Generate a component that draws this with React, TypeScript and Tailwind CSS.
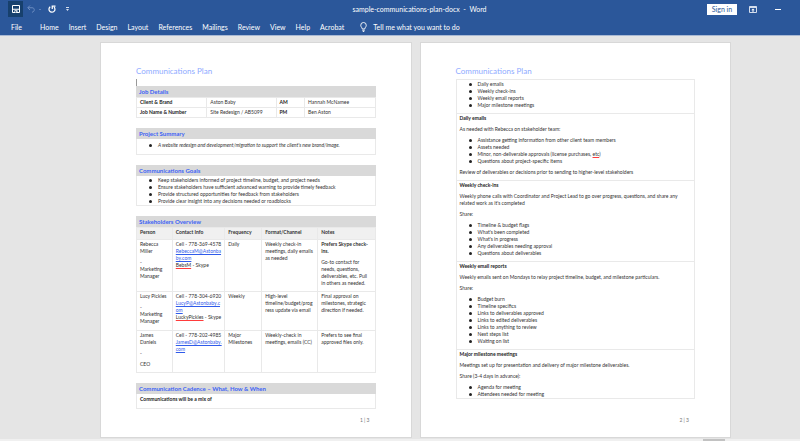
import type { ReactNode } from "react";
import { clsx } from "clsx";

const tabs = ["Home", "Insert", "Design", "Layout", "References", "Mailings", "Review", "View", "Help", "Acrobat"];

const jobRows = [
  ["Client & Brand", "Aston Baby", "AM", "Hannah McNamee"],
  ["Job Name & Number", "Site Redesign / AB5099", "PM", "Ben Aston"],
];

const goals = [
  "Keep stakeholders informed of project timeline, budget, and project needs",
  "Ensure stakeholders have sufficient advanced warning to provide timely feedback",
  "Provide structured opportunities for feedback from stakeholders",
  "Provide clear insight into any decisions needed or roadblocks",
];

function TitleBar() {
  return (
    <div className="grid grid-cols-[132px_1fr_93px] items-center h-[18px]">
      <div className="flex items-center pl-2">
        <button aria-label="Save" className="flex items-center justify-center w-[15px] h-4 bg-[#17406d]">
          <svg viewBox="0 0 16 16" className="size-2">
            <path d="M1 1h14v14H1z" fill="none" stroke="#fff" strokeWidth="2" />
            <path d="M2 8.5h12" stroke="#fff" strokeWidth="2" />
            <path d="M5 10.5h6V15H5z" fill="#fff" />
            <path d="M6.5 12h2v3h-2z" fill="#17406d" />
          </svg>
        </button>
        <button aria-label="Undo" className="flex items-center ml-1">
          <svg viewBox="0 0 16 16" className="size-2" fill="none" stroke="#6c8cc0" strokeWidth="2">
            <path d="M6 1L1.500 5.500 6 10M2 5.500h8c3 0 4.500 1.500 4.500 4s-1.500 4.500-4.500 5" />
          </svg>
        </button>
        <span className="w-[2px] h-px ml-1 bg-[#5d80b8]" />
        <button aria-label="Repeat" className="flex items-center ml-[7px]">
          <svg viewBox="0 0 16 16" className="size-2" fill="none" stroke="#fff" strokeWidth="2.500">
            <path d="M4.500 3.500A6 6 0 1 0 12 4" />
            <path d="M8.500 8V2H15" />
          </svg>
        </button>
        <button aria-label="Customize toolbar" className="flex items-center ml-[10px]">
          <svg viewBox="0 0 6 8" className="w-[3px] h-1" fill="#d5deed">
            <path d="M0 0h6v2H0zM0 4h6L3 8z" />
          </svg>
        </button>
      </div>
      <div className="text-center leading-[10px]">sample-communications-plan-docx&nbsp; - &nbsp;Word</div>
      <div className="flex items-center">
        <button className="w-[30px] h-[11px] bg-white text-[#2b579a] leading-[10px]">Sign in</button>
        <button aria-label="Ribbon display options" className="flex items-center ml-3">
          <svg viewBox="0 0 16 14" className="w-2 h-[7px]">
            <path d="M1 1h14v12H1z" fill="none" stroke="#d5deed" strokeWidth="2" />
            <path d="M1 1h14v3H1z" fill="#d5deed" />
            <path d="M8 5l3.500 3.500H9V12H7V8.500H4.500z" fill="#fff" />
          </svg>
        </button>
        <button aria-label="Minimize" className="flex items-center w-[6px] h-2 ml-[18px]">
          <span className="w-full h-px bg-white" />
        </button>
      </div>
    </div>
  );
}

function Ribbon() {
  return (
    <header className="bg-[#2b579a] text-white text-[7px] border-b border-[#a9b9d4]">
      <TitleBar />
      <nav className="flex items-center h-[17px] pl-[11px] leading-[10px] whitespace-nowrap">
        <button className="mr-[18px]">File</button>
        <div className="flex gap-[10px]">
          {tabs.map((tab) => (
            <button key={tab}>{tab}</button>
          ))}
        </div>
        <button className="flex items-center gap-[6px] ml-4">
          <svg viewBox="0 0 14 20" className="w-[7px] h-[10px]" fill="none" stroke="#fff" strokeWidth="1.800">
            <path d="M4.500 14c0-3-3-4-3-7.500a5.500 5.500 0 0 1 11 0c0 3.500-3 4.500-3 7.500z" />
            <path d="M4.500 16.500h5M5.500 19h3" />
          </svg>
          Tell me what you want to do
        </button>
      </nav>
    </header>
  );
}

function Page({ number, children }: { number: number; children: ReactNode }) {
  return (
    <article className="flex flex-col bg-white border border-[#d8d8d8] px-[35px] pt-[23px] pb-[13px]">
      <h1 className="mb-[3px] text-[8px] leading-[10px] text-[#8eaaff]">Communications Plan</h1>
      {children}
      <footer className="mt-auto pr-[6px] text-right text-[#777]">{number} | 3</footer>
    </article>
  );
}

function Section({ title, children }: { title: string; children: ReactNode }) {
  return (
    <section className="mb-[10px] last-of-type:mb-0">
      <h2 className="px-[3px] bg-[#d9d9d9] text-[#3d63f5] text-[6px] leading-[11px] font-bold">{title}</h2>
      {children}
    </section>
  );
}

function Bullets({ items }: { items: ReactNode[] }) {
  return (
    <ul className="pl-[9px]">
      {items.map((item, i) => (
        <li
          key={i}
          className="flex items-center gap-[6px] before:content-[''] before:size-[3px] before:rounded-full before:bg-[#222]"
        >
          <span>{item}</span>
        </li>
      ))}
    </ul>
  );
}

function Misspelled({ children }: { children: ReactNode }) {
  return <span className="underline decoration-1 decoration-[#ff3b3b]">{children}</span>;
}

function MailLink({ children }: { children: ReactNode }) {
  return (
    <a href="#mail" className="text-[#2f5bea] underline">
      {children}
    </a>
  );
}

function Block({ title, children }: { title?: string; children: ReactNode }) {
  return (
    <section className="flex flex-col gap-1 px-[3px] pt-[1px] pb-1 border-t border-[#e9e9e9] last:pb-0">
      {title && <h3 className="font-bold text-[#222]">{title}</h3>}
      {children}
    </section>
  );
}

const stakeholders = [
  {
    person: [["Rebecca", "Miller"], ["-", "Marketing", "Manager"]],
    contact: (
      <>
        Cell - 778-369-4578
        <br />
        <MailLink>RebeccaM@Astonba<br />by.com</MailLink>
        <br />
        <Misspelled>BebsM</Misspelled> - Skype
      </>
    ),
    frequency: "Daily",
    format: <>Weekly check-in<br />meetings, daily emails<br />as needed</>,
    notes: (
      <>
        <p className="mb-1 font-bold">Prefers Skype check-<br />ins.</p>
        <p>Go-to contact for<br />needs, questions,<br />deliverables, etc. Pull<br />in others as needed.</p>
      </>
    ),
    height: "h-[52px]",
  },
  {
    person: [["Lucy Pickles"], ["-", "Marketing", "Manager"]],
    contact: (
      <>
        Cell - 778-304-6920
        <br />
        <MailLink>LucyP@Astonbaby.c<br />om</MailLink>
        <br />
        <Misspelled>LuckyPickles</Misspelled> - Skype
      </>
    ),
    frequency: "Weekly",
    format: <>High-level<br />timeline/budget/prog<br />ress update via email</>,
    notes: <>Final approval on<br />milestones, strategic<br />direction if needed.</>,
    height: "h-[39px]",
  },
  {
    person: [["James", "Daniels"], ["-"], ["CEO"]],
    contact: (
      <>
        Cell - 778-202-4985
        <br />
        <MailLink>JamesD@Astonbaby.<br />com</MailLink>
      </>
    ),
    frequency: <>Major<br />Milestones</>,
    format: <>Weekly-check in<br />meetings, emails (CC)</>,
    notes: <>Prefers to see final<br />approved files only.</>,
    height: "h-[42px]",
  },
];

function StakeholderTable() {
  const cell = "border border-[#e9e9e9] px-[3px] pt-[1px] align-top";
  return (
    <table className="w-full table-fixed border-collapse whitespace-nowrap">
      <thead>
        <tr className="h-3 bg-[#f0f0f0] text-left text-[#333]">
          <th className={clsx(cell, "w-[15%]")}>Person</th>
          <th className={clsx(cell, "w-[22%]")}>Contact Info</th>
          <th className={clsx(cell, "w-[15.500%]")}>Frequency</th>
          <th className={clsx(cell, "w-[23.500%]")}>Format/Channel</th>
          <th className={cell}>Notes</th>
        </tr>
      </thead>
      <tbody>
        {stakeholders.map((row, i) => (
          <tr key={i} className={row.height}>
            <td className={cell}>
              <div className="flex flex-col gap-1">
                {row.person.map((lines, j) => (
                  <div key={j}>
                    {lines.map((line) => (
                      <p key={line}>{line}</p>
                    ))}
                  </div>
                ))}
              </div>
            </td>
            <td className={cell}>{row.contact}</td>
            <td className={cell}>{row.frequency}</td>
            <td className={cell}>{row.format}</td>
            <td className={cell}>{row.notes}</td>
          </tr>
        ))}
      </tbody>
    </table>
  );
}

export default function App() {
  return (
    <div className="min-h-screen flex flex-col bg-[#e5e5e5] font-[Lato,sans-serif]">
      <Ribbon />

      {/* Document */}
      <main className="flex-1 grid grid-cols-2 gap-2 pl-[100px] pr-[69px] pt-[6px] text-[5px] leading-[7px] text-[#333]">
        <Page number={1}>
          <div className="h-[7px] w-px bg-[#999]" />
          <Section title="Job Details">
            <table className="w-full table-fixed border-collapse">
              <tbody>
                {jobRows.map(([label, value, role, name]) => (
                  <tr key={label} className="h-[10px]">
                    <th className="w-[29.500%] border border-[#e9e9e9] px-[3px] text-left text-[#222]">{label}</th>
                    <td className="w-[29%] border border-[#e9e9e9] px-[3px]">{value}</td>
                    <th className="w-[12%] border border-[#e9e9e9] px-[3px] text-left text-[#222]">{role}</th>
                    <td className="border border-[#e9e9e9] px-[3px]">{name}</td>
                  </tr>
                ))}
              </tbody>
            </table>
          </Section>

          <Section title="Project Summary">
            <div className="h-4 px-[3px] pt-[3px] border border-t-0 border-[#e9e9e9] italic">
              <Bullets items={["A website redesign and development/migration to support the client's new brand/image."]} />
            </div>
          </Section>

          <Section title="Communications Goals">
            <div className="px-[3px] pt-[1px] border border-t-0 border-[#e9e9e9]">
              <Bullets items={goals} />
            </div>
          </Section>

          <Section title="Stakeholders Overview">
            <StakeholderTable />
          </Section>

          <Section title="Communication Cadence – What, How & When">
            <p className="h-[15px] px-[3px] pt-[2px] border border-t-0 border-[#e9e9e9] font-bold text-[#222]">
              Communications will be a mix of
            </p>
          </Section>
        </Page>

        <Page number={2}>
          <div className="border border-t-0 border-[#e9e9e9]">
            <Block>
              <Bullets items={["Daily emails", "Weekly check-ins", "Weekly email reports", "Major milestone meetings"]} />
            </Block>
            <Block title="Daily emails">
              <p>As needed with Rebecca on stakeholder team:</p>
              <Bullets
                items={[
                  "Assistance getting information from other client team members",
                  "Assets needed",
                  <>Minor, non-deliverable approvals (license purchases, <Misspelled>etc</Misspelled>)</>,
                  "Questions about project-specific items",
                ]}
              />
              <p>Review of deliverables or decisions prior to sending to higher-level stakeholders</p>
            </Block>
            <Block title="Weekly check-ins">
              <p>
                Weekly phone calls with Coordinator and Project Lead to go over progress, questions, and share any
                related work as it's completed
              </p>
              <p>Share:</p>
              <Bullets
                items={[
                  "Timeline & budget flags",
                  "What's been completed",
                  "What's in progress",
                  "Any deliverables needing approval",
                  "Questions about deliverables",
                ]}
              />
            </Block>
            <Block title="Weekly email reports">
              <p>Weekly emails sent on Mondays to relay project timeline, budget, and milestone particulars.</p>
              <p>Share:</p>
              <Bullets
                items={[
                  "Budget burn",
                  "Timeline specifics",
                  "Links to deliverables approved",
                  "Links to edited deliverables",
                  "Links to anything to review",
                  "Next steps list",
                  "Waiting on list",
                ]}
              />
            </Block>
            <Block title="Major milestone meetings">
              <p>Meetings set up for presentation and delivery of major milestone deliverables.</p>
              <p>Share (3-4 days in advance):</p>
              <Bullets items={["Agenda for meeting", "Attendees needed for meeting"]} />
            </Block>
          </div>
        </Page>
      </main>

      {/* Horizontal scrollbar */}
      <div className="flex justify-end h-[2px] mt-px pr-[75px] bg-[#f0f0f0]">
        <div className="w-[22px] bg-[#c2c2c2]" />
      </div>
    </div>
  );
}
